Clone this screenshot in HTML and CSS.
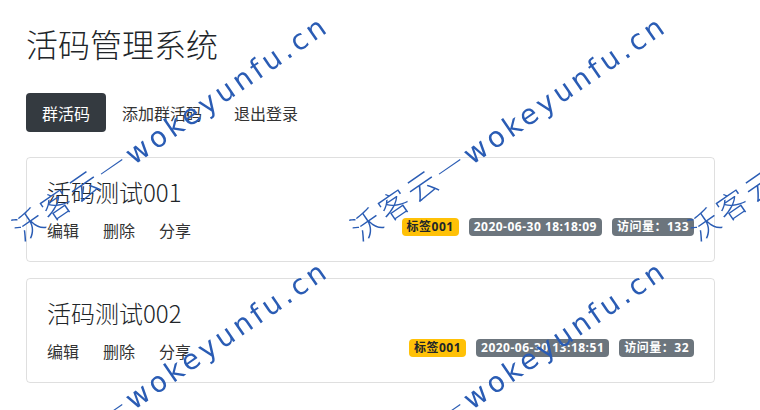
FILE: index.html
```html
<!DOCTYPE html>
<html lang="zh-CN">
<head>
<meta charset="utf-8">
<title>活码管理系统</title>
<link rel="stylesheet" href="styles.css">
</head>
<body>
<div class="page">
  <h1 class="title">活码管理系统</h1>
  <nav class="nav">
    <a class="nav-link active" href="#">群活码</a>
    <a class="nav-link" href="#">添加群活码</a>
    <a class="nav-link" href="#">退出登录</a>
  </nav>
  <div class="list">
    <div class="card">
      <h2 class="card-title">活码测试001</h2>
      <div class="card-foot">
        <div class="actions"><a href="#">编辑</a><a href="#">删除</a><a href="#">分享</a></div>
        <div class="badges">
          <span class="badge badge-warning">标签001</span>
          <span class="badge badge-secondary">2020-06-30 18:18:09</span>
          <span class="badge badge-secondary">访问量：133</span>
        </div>
      </div>
    </div>
    <div class="card">
      <h2 class="card-title">活码测试002</h2>
      <div class="card-foot">
        <div class="actions"><a href="#">编辑</a><a href="#">删除</a><a href="#">分享</a></div>
        <div class="badges">
          <span class="badge badge-warning">标签001</span>
          <span class="badge badge-secondary">2020-06-30 13:18:51</span>
          <span class="badge badge-secondary">访问量：32</span>
        </div>
      </div>
    </div>
  </div>
</div>
<div class="watermark" aria-hidden="true">
  <span class="wm wm-a1"><span class="wm-cn">沃客云—</span>wokeyunfu.cn</span>
  <span class="wm wm-b1"><span class="wm-cn">沃客云—</span>wokeyunfu.cn</span>
  <span class="wm wm-c1"><span class="wm-cn">沃客云—</span>wokeyunfu.cn</span>
  <span class="wm wm-a2"><span class="wm-cn">沃客云—</span>wokeyunfu.cn</span>
  <span class="wm wm-b2"><span class="wm-cn">沃客云—</span>wokeyunfu.cn</span>
  <span class="wm wm-c2"><span class="wm-cn">沃客云—</span>wokeyunfu.cn</span>
</div>
</body>
</html>
```

FILE: styles.css
```css
* { box-sizing: border-box; }
html, body { margin: 0; padding: 0; background: #fff; }
body {
  font-family: "Noto Sans CJK SC", "Noto Sans", sans-serif;
  color: #212529;
  font-size: 16px;
  line-height: 1.5;
}
.page {
  width: 715px;
  padding-left: 26px;
}
.title {
  margin: 24px 0 30.6px;
  font-size: 32px;
  font-weight: 300;
  line-height: 38.4px;
}
.nav {
  display: flex;
}
.nav-link {
  display: block;
  padding: 7.5px 16px;
  line-height: 24px;
  color: #333;
  text-decoration: none;
  border-radius: 4px;
}
.nav-link.active {
  background: #343a40;
  color: #fff;
}
.list {
  margin-top: 25px;
  display: flex;
  flex-direction: column;
  gap: 16px;
}
.card {
  border: 1px solid rgba(0,0,0,.125);
  border-radius: 4px;
  padding: 20px 20px 19px;
}
.card-title {
  margin: 0 0 11px;
  font-size: 24px;
  font-weight: 300;
  line-height: 28.8px;
}
.card-foot {
  display: flex;
  justify-content: space-between;
  align-items: flex-start;
}
.actions {
  display: flex;
  gap: 24px;
  line-height: 24px;
}
.actions a {
  color: #333;
  text-decoration: none;
}
.badges {
  display: flex;
  gap: 10px;
}
.badge {
  display: inline-block;
  font-family: "Open Sans", "Noto Sans CJK SC", sans-serif;
  font-size: 12px;
  font-weight: 700;
  line-height: 1;
  padding: 3px 5px;
  border-radius: 4px;
  white-space: nowrap;
  letter-spacing: .5px;
}
.badge-warning { background: #ffc107; color: #212529; }
.badge-secondary { background: #6c757d; color: #fff; }

.watermark {
  position: fixed;
  inset: 0;
  overflow: hidden;
  pointer-events: none;
}
.wm {
  position: absolute;
  font-family: "DejaVu Sans", "Noto Sans CJK SC", sans-serif;
  font-size: 28px;
  line-height: 34px;
  letter-spacing: 3.8px;
  color: #2a5cb4;
  white-space: nowrap;
  transform-origin: 0 50%;
  transform: rotate(-34.5deg);
}
.wm-cn {
  font-family: "Noto Sans CJK SC", sans-serif;
  font-size: 30px;
  font-weight: 300;
}
.wm-a1 { left: 16px; top: 214px; }
.wm-b1 { left: 354px; top: 214px; }
.wm-c1 { left: 692px; top: 214px; }
.wm-a2 { left: 16px; top: 459px; }
.wm-b2 { left: 354px; top: 459px; }
.wm-c2 { left: 692px; top: 459px; }
```
